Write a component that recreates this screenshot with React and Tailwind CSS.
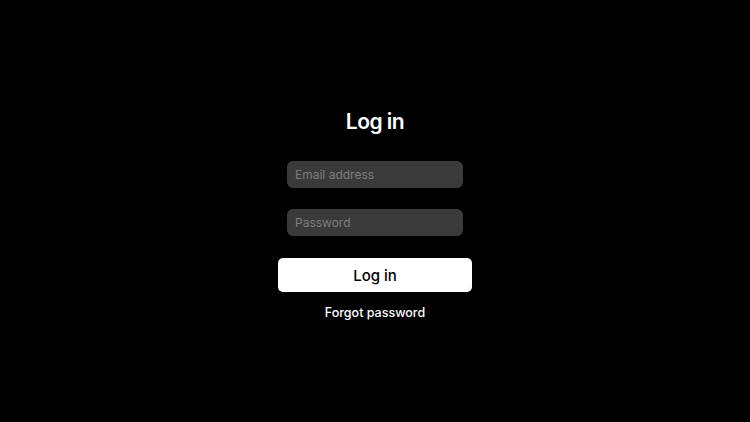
export default function App() {
  return (
    <div
      className="w-full h-[422px] bg-black flex flex-col items-center pt-[108px]"
      style={{ fontFamily: "Inter, 'Noto Sans', sans-serif" }}
    >
      <h1 className="text-[21px] leading-[28px] font-semibold tracking-tight text-white">Log in</h1>
      <input
        type="email"
        placeholder="Email address"
        className="mt-[25px] w-[176px] h-[27px] rounded-[6px] bg-[#3a3a3a] px-2 text-[12px] text-white placeholder:text-[#7d7d7d] outline-none"
      />
      <input
        type="password"
        placeholder="Password"
        className="mt-[21px] w-[176px] h-[27px] rounded-[6px] bg-[#3a3a3a] px-2 text-[12px] text-white placeholder:text-[#7d7d7d] outline-none"
      />
      <button className="mt-[22px] w-[194px] h-[34px] pt-[2px] rounded-[5px] bg-white text-black text-[15px] font-medium">
        Log in
      </button>
      <a className="mt-[11px] text-[12.5px] leading-[20px] text-white font-medium">Forgot password</a>
    </div>
  );
}
